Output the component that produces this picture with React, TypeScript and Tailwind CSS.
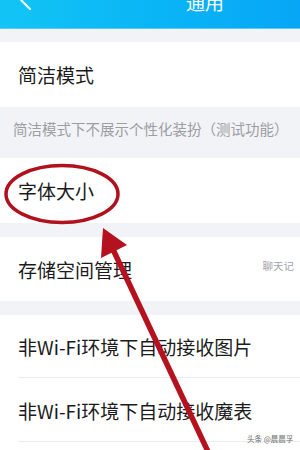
const font = { fontFamily: '"Noto Sans CJK SC", "Noto Sans", sans-serif' };

function Row({ label, right, divider }: { label: string; right?: string; divider?: boolean }) {
  return (
    <div className="relative flex items-center bg-white h-full">
      <span className="pl-[18px] text-[19px] leading-none text-[#1b1b1b] whitespace-nowrap">{label}</span>
      {right && (
        <span className="ml-auto mr-[6px] -mt-[6px] text-[10.5px] leading-none text-[#a3a3a8] whitespace-nowrap">
          {right}
        </span>
      )}
      {divider && <div className="absolute left-[18px] right-0 bottom-0 h-px bg-[#ececee]" />}
    </div>
  );
}

export default function App() {
  return (
    <div style={font} className="relative w-[300px] h-[450px] overflow-hidden bg-[#f2f3f7] flex flex-col">
      {/* header, cut off at the top */}
      <div className="relative h-[29px] shrink-0 bg-gradient-to-r from-[#12c5f5] to-[#07a6f6] border-b border-[#5fcaf7] overflow-hidden">
        <svg className="absolute left-[12px] top-[-12px]" width="24" height="24" viewBox="0 0 24 24">
          <path d="M18 0 L8 11 L18 21" fill="none" stroke="#fff" strokeWidth="2" strokeLinecap="round" />
        </svg>
        <span className="absolute left-[186px] top-[-8px] text-[19px] leading-none text-white">通用</span>
      </div>

      <div className="h-[13px] shrink-0" />
      <div className="h-[65px] shrink-0">
        <Row label="简洁模式" />
      </div>
      <div className="h-[51px] shrink-0 pt-[12px] pl-[13px]">
        <p className="text-[14.5px] leading-[20px] text-[#9d9da2] whitespace-nowrap">简洁模式下不展示个性化装扮（测试功能）</p>
      </div>
      <div className="h-[65px] shrink-0">
        <Row label="字体大小" />
      </div>
      <div className="h-[14px] shrink-0" />
      <div className="h-[64px] shrink-0">
        <Row label="存储空间管理" right="聊天记" />
      </div>
      <div className="h-[14px] shrink-0" />
      <div className="h-[63px] shrink-0">
        <Row label="非Wi-Fi环境下自动接收图片" divider />
      </div>
      <div className="h-[64px] shrink-0">
        <Row label="非Wi-Fi环境下自动接收魔表" divider />
      </div>
      <div className="flex-1 bg-white" />

      {/* annotation overlay */}
      <svg className="absolute inset-0 pointer-events-none" width="300" height="450" viewBox="0 0 300 450">
        <ellipse cx="62" cy="194" rx="56" ry="28.5" fill="none" stroke="#b0111d" strokeWidth="3.5" />
        <line x1="211" y1="458" x2="110" y2="243" stroke="#b3121e" strokeWidth="5.5" />
        <polygon points="103,228 127,245 101,258" fill="#b3121e" />
      </svg>

      <span className="absolute left-[247px] top-[435px] text-[7.5px] leading-none text-[#6b6b6b] whitespace-nowrap">
        头条 @晨晨孚
      </span>
    </div>
  );
}
